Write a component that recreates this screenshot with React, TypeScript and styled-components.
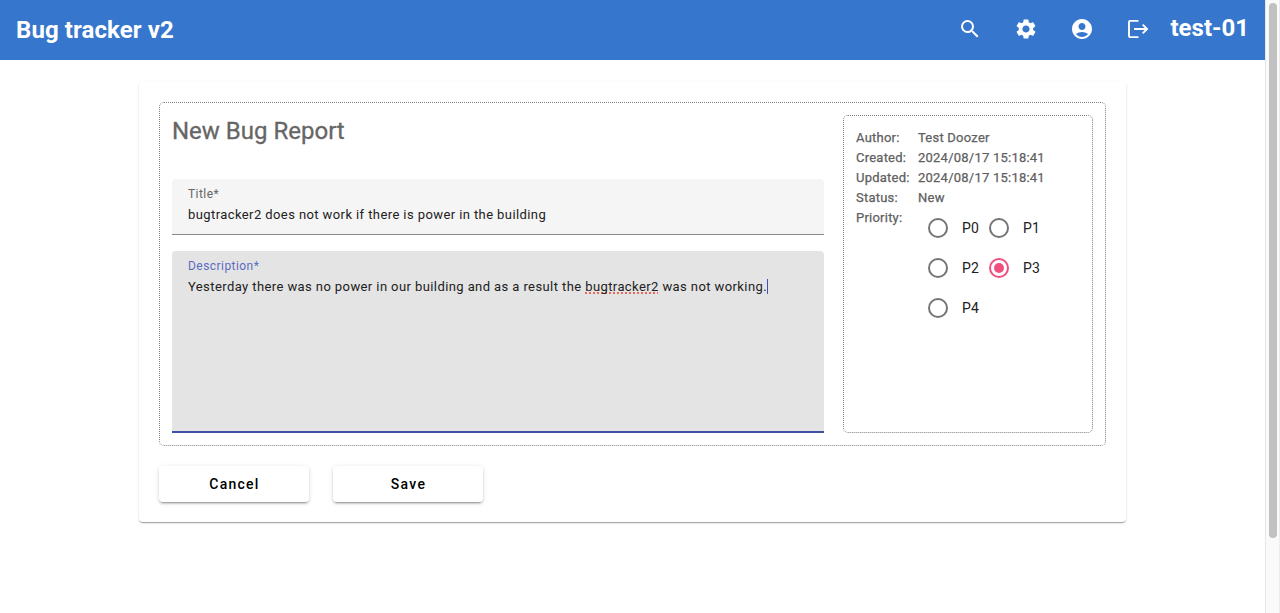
import React from "react";
import styled, { createGlobalStyle } from "styled-components";
import { MdSearch, MdSettings, MdAccountCircle } from "react-icons/md";

const GlobalStyle = createGlobalStyle`
  *, *::before, *::after { box-sizing: border-box; }
  body { margin: 0; background: #fff; font-family: Roboto, "Liberation Sans", sans-serif; overflow: hidden; }
`;

const Window = styled.div`
  display: flex;
  width: 1280px;
  height: 613px;
`;

const Page = styled.div`
  flex: 1;
  display: flex;
  flex-direction: column;
`;

const Toolbar = styled.header`
  display: flex;
  align-items: center;
  justify-content: space-between;
  height: 60px;
  padding: 0 16px;
  background: #3676cd;
  color: #fff;
`;

const Brand = styled.h1`
  margin: 0;
  font-size: 24px;
  font-weight: 700;
  line-height: 32px;
  letter-spacing: 0.1px;
`;

const Actions = styled.nav`
  display: flex;
  align-items: center;
  padding-bottom: 2px;
`;

const IconButton = styled.button`
  display: flex;
  align-items: center;
  justify-content: center;
  width: 56px;
  height: 48px;
  padding: 0;
  border: 0;
  background: none;
  color: inherit;
`;

const UserName = styled.span`
  margin-left: 4.3px;
  padding-bottom: 2px;
  font-size: 24px;
  font-weight: 700;
  line-height: 32px;
  letter-spacing: 0;
`;

const ScrollTrack = styled.div`
  width: 15px;
  height: 100%;
  padding: 3px 2px 0 3px;
  border-left: 1px solid #e8e8e8;
  border-right: 1px solid #ececec;
  background: #fafafa;
`;

const ScrollThumb = styled.div`
  width: 8px;
  height: 535px;
  border-radius: 4px;
  background: #c1c1c1;
`;

const Card = styled.main`
  width: 987px;
  height: 440px;
  margin: 22px 0 0 139px;
  padding: 20px;
  border-radius: 4px;
  box-shadow: 0 2px 1px -1px rgba(0, 0, 0, 0.2), 0 1px 1px rgba(0, 0, 0, 0.14), 0 1px 3px rgba(0, 0, 0, 0.12);
`;

const Report = styled.section`
  display: flex;
  justify-content: space-between;
  width: 947px;
  height: 344px;
  padding: 12px;
  border: 1px dotted #808080;
  border-radius: 5px;
`;

const Form = styled.form`
  display: flex;
  flex-direction: column;
  width: 652px;
`;

const Heading = styled.h2`
  margin: 0 0 32px;
  font-size: 24px;
  font-weight: 400;
  line-height: 32px;
  color: #666;
  -webkit-text-stroke: 0.3px #666;
`;

const Field = styled.div<{ $focused?: boolean }>`
  height: ${(p) => (p.$focused ? 182 : 56)}px;
  margin-bottom: ${(p) => (p.$focused ? 0 : 16)}px;
  padding: 6px 16px 0;
  border-radius: 4px 4px 0 0;
  border-bottom: ${(p) => (p.$focused ? "2px solid #3f51a5" : "1px solid #8a8a8a")};
  background: ${(p) => (p.$focused ? "#e4e4e4" : "#f5f5f5")};
`;

const FieldLabel = styled.div<{ $focused?: boolean }>`
  font-size: 12px;
  line-height: 18px;
  letter-spacing: 0.45px;
  color: ${(p) => (p.$focused ? "#5c6bc0" : "#666")};
`;

const FieldText = styled.div`
  display: flex;
  align-items: center;
  height: 22px;
  font-size: 13px;
  letter-spacing: 0.41px;
  white-space: pre;
  color: #212121;
`;

const Misspelled = styled.span`
  text-decoration: underline dotted #ee675c 2px;
  text-underline-offset: 2px;
  text-decoration-skip-ink: none;
`;

const Caret = styled.span`
  width: 1px;
  height: 15px;
  margin-left: -0.5px;
  background: #3f51b5;
`;

const Details = styled.aside`
  display: grid;
  grid-template-columns: 62px 1fr;
  grid-template-rows: repeat(4, 20px) 1fr;
  width: 250px;
  height: 318px;
  padding: 12px;
  border: 1px dotted #808080;
  border-radius: 5px;
  font-size: 13px;
  font-weight: 400;
  line-height: 20px;
  letter-spacing: 0.23px;
  color: #606060;
  -webkit-text-stroke: 0.25px #606060;
  white-space: nowrap;
`;

const PriorityGrid = styled.div`
  display: grid;
  grid-template-columns: 61px 61px;
  grid-auto-rows: 40px;
  -webkit-text-stroke: 0;
`;

const Option = styled.label`
  display: flex;
  align-items: center;
  gap: 14px;
  padding-left: 10px;
  font-size: 14px;
  font-weight: 400;
  letter-spacing: 0.25px;
  color: #212121;
`;

const Radio = styled.span<{ $checked: boolean }>`
  display: flex;
  flex: none;
  align-items: center;
  justify-content: center;
  width: 20px;
  height: 20px;
  border: 2px solid ${(p) => (p.$checked ? "#f0507f" : "#757575")};
  border-radius: 50%;

  &::after {
    content: "";
    width: 10px;
    height: 10px;
    border-radius: 50%;
    background: ${(p) => (p.$checked ? "#f0507f" : "transparent")};
  }
`;

const ButtonRow = styled.div`
  display: flex;
  gap: 24px;
  margin-top: 20px;
`;

const RaisedButton = styled.button`
  width: 150px;
  height: 36px;
  padding: 0 0 0 1px;
  border: 0;
  border-radius: 4px;
  background: #fff;
  box-shadow: 0 3px 1px -2px rgba(0, 0, 0, 0.2), 0 2px 2px rgba(0, 0, 0, 0.14), 0 1px 5px rgba(0, 0, 0, 0.12);
  font-family: inherit;
  font-size: 14px;
  font-weight: 500;
  letter-spacing: 1.25px;
  color: #000;
`;

const LogoutIcon = () => (
  <svg width="24" height="24" viewBox="0 0 24 24" fill="none" stroke="currentColor" strokeWidth="1.9">
    <path d="M12.5 3.9H4a1 1 0 0 0-1 1v14.2a1 1 0 0 0 1 1h8.5" />
    <path d="M8 12h13M16.7 7.6l4.4 4.4-4.4 4.4" />
  </svg>
);

const details = [
  ["Author:", "Test Doozer"],
  ["Created:", "2024/08/17 15:18:41"],
  ["Updated:", "2024/08/17 15:18:41"],
  ["Status:", "New"],
];

const priorities = ["P0", "P1", "P2", "P3", "P4"];

export default function App() {
  return (
    <Window>
      <GlobalStyle />
      <Page>
        <Toolbar>
          <Brand>Bug tracker v2</Brand>
          <Actions>
            <IconButton aria-label="Search"><MdSearch size={24} /></IconButton>
            <IconButton aria-label="Settings"><MdSettings size={24} /></IconButton>
            <IconButton aria-label="Account"><MdAccountCircle size={24} /></IconButton>
            <IconButton aria-label="Log out"><LogoutIcon /></IconButton>
            <UserName>test-01</UserName>
          </Actions>
        </Toolbar>
        <Card>
          <Report>
            <Form>
              <Heading>New Bug Report</Heading>
              <Field>
                <FieldLabel>Title*</FieldLabel>
                <FieldText>bugtracker2 does not work if there is power in the building</FieldText>
              </Field>
              <Field $focused>
                <FieldLabel $focused>Description*</FieldLabel>
                <FieldText>
                  <span>Yesterday there was no power in our building and as a result the <Misspelled>bugtracker2</Misspelled> was not working.</span>
                  <Caret />
                </FieldText>
              </Field>
            </Form>
            <Details>
              {details.map(([name, value]) => (
                <React.Fragment key={name}>
                  <span>{name}</span>
                  <span>{value}</span>
                </React.Fragment>
              ))}
              <span>Priority:</span>
              <PriorityGrid>
                {priorities.map((p) => (
                  <Option key={p}>
                    <Radio $checked={p === "P3"} />
                    {p}
                  </Option>
                ))}
              </PriorityGrid>
            </Details>
          </Report>
          <ButtonRow>
            <RaisedButton>Cancel</RaisedButton>
            <RaisedButton>Save</RaisedButton>
          </ButtonRow>
        </Card>
      </Page>
      <ScrollTrack>
        <ScrollThumb />
      </ScrollTrack>
    </Window>
  );
}
